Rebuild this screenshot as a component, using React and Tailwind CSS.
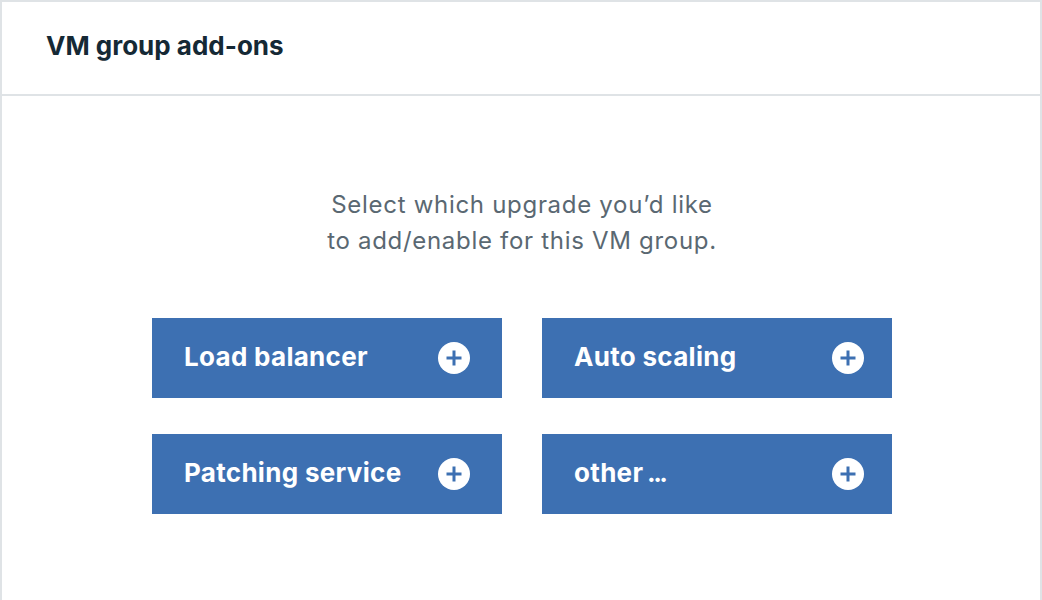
import React from 'react';

const addons = [{
  name: 'Load balancer',
  pr: 'pr-[32px]'
}, {
  name: 'Auto scaling',
  pr: 'pr-[28px]'
}, {
  name: 'Patching service',
  pr: 'pr-[32px]'
}, {
  name: 'other',
  more: true,
  pr: 'pr-[28px]'
}];

function PlusCircle() {
  return <svg width="32" height="32" viewBox="0 0 32 32" className="shrink-0">
      <circle cx="16" cy="16" r="16" fill="#ffffff" />
      <path d="M16 8.5v15M8.5 16h15" stroke="#3d70b2" strokeWidth="3" />
    </svg>;
}

export default function App() {
  return <div className="w-[1042px] h-[600px] bg-white border-t-2 border-x-2 border-[#dfe3e6] overflow-hidden" style={{
    fontFamily: 'Inter, "Liberation Sans", sans-serif'
  }}>
      {/* header */}
      <div className="h-[94px] flex items-center px-[44px] border-b-2 border-[#dfe3e6]">
        <h1 className="text-[26px] font-bold text-[#152935] pb-[6px]">VM group add-ons</h1>
      </div>

      <div className="pt-[91px] pl-[2px] flex flex-col items-center">
        <p className="text-[24px] leading-[36px] tracking-[0.7px] text-[#5a6872] text-center">
          Select which upgrade you’d like<br />to add/enable for this VM group.
        </p>

        <div className="mt-[59px] grid grid-cols-[350px_350px] gap-x-[40px] gap-y-[36px]">
          {addons.map(a => <button key={a.name} className={`h-[80px] bg-[#3d70b2] flex items-center justify-between pl-[32px] ${a.pr} text-white text-[26px] tracking-[0.3px] font-bold`}>
              <span className="pb-[4px]">
                {a.name}
                {a.more && <span className="tracking-[-2.5px]"> ...</span>}
              </span>
              <PlusCircle />
            </button>)}
        </div>
      </div>
    </div>;
}
